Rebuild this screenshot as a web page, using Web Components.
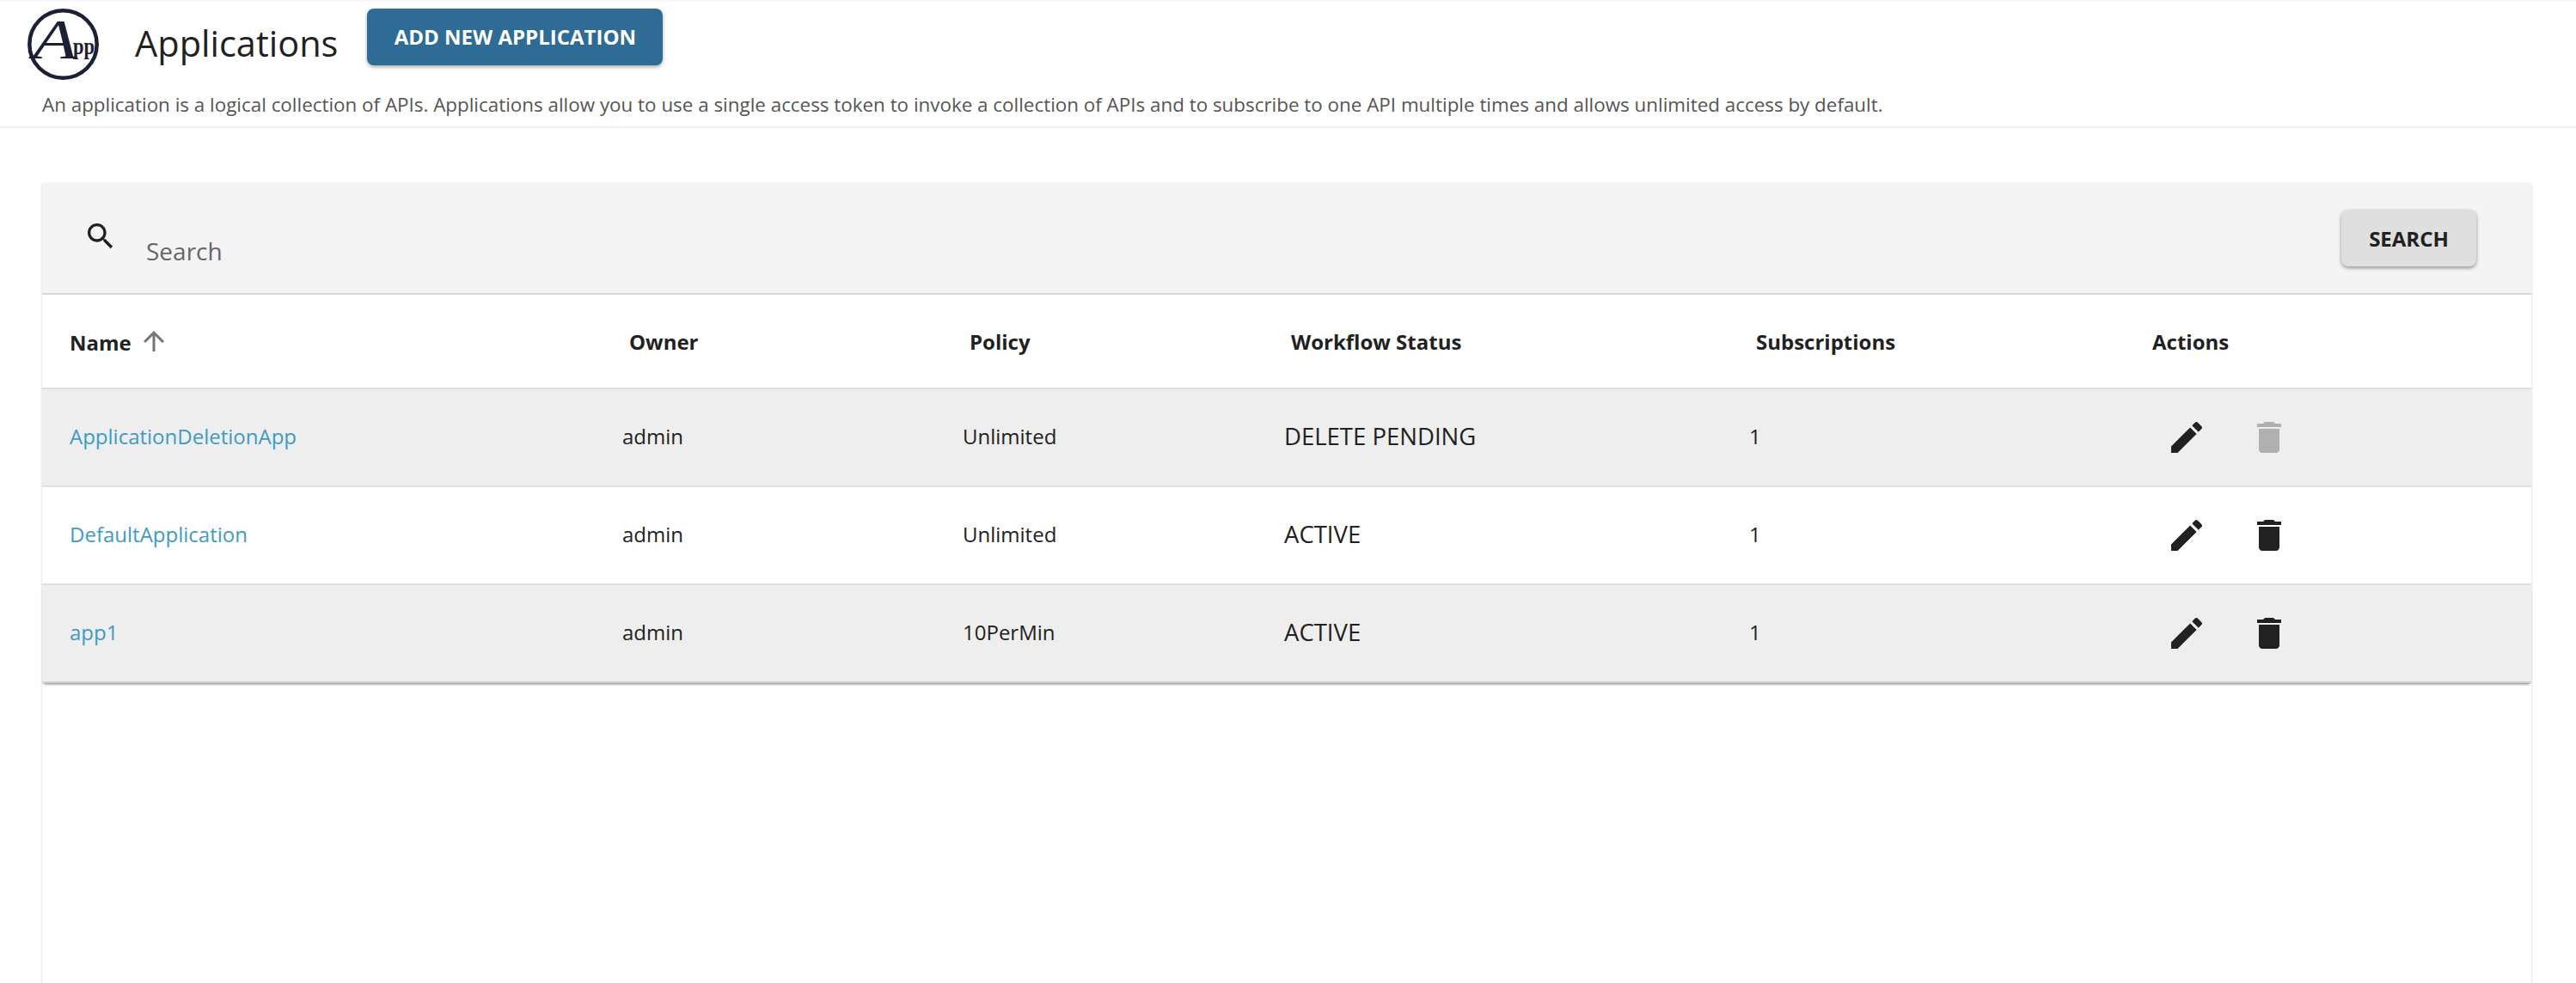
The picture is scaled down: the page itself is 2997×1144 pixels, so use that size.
<!DOCTYPE html>
<html>
<head>
<meta charset="utf-8">
<title>Applications</title>
<style>
    html, body { margin: 0; padding: 0; height: 100%; background: #fff; overflow: hidden; }
    body { font-family: "Open Sans", "Liberation Sans", sans-serif; color: #212121; }
</style>
</head>
<body>
<app-header title-text="Applications" action="ADD NEW APPLICATION">An application is a logical collection of APIs. Applications allow you to use a single access token to invoke a collection of APIs and to subscribe to one API multiple times and allows unlimited access by default.</app-header>
<app-card>
    <search-bar></search-bar>
    <table-head></table-head>
    <app-row name="ApplicationDeletionApp" owner="admin" policy="Unlimited" status="DELETE PENDING" subs="1" shaded disabled></app-row>
    <app-row name="DefaultApplication" owner="admin" policy="Unlimited" status="ACTIVE" subs="1"></app-row>
    <app-row name="app1" owner="admin" policy="10PerMin" status="ACTIVE" subs="1" shaded last></app-row>
</app-card>

<script>
;(function(document){
    'use strict';

    const COLUMNS = 'grid-template-columns: 643px 396px 374px 541px 461px 1fr;';

    const ICONS = {
        search: 'M15.5 14h-.79l-.28-.27C15.41 12.59 16 11.11 16 9.5 16 5.91 13.09 3 9.5 3S3 5.91 3 9.5 5.91 16 9.5 16c1.61 0 3.09-.59 4.23-1.57l.27.28v.79l5 4.99L20.49 19l-4.99-5zm-6 0C7.01 14 5 11.99 5 9.5S7.01 5 9.5 5 14 7.01 14 9.5 11.99 14 9.5 14z',
        up: 'M4 12l1.41 1.41L11 7.83V20h2V7.83l5.58 5.59L20 12l-8-8-8 8z',
        edit: 'M3 17.25V21h3.75L17.81 9.94l-3.75-3.75L3 17.25zM20.71 7.04c.39-.39.39-1.02 0-1.41l-2.34-2.34c-.39-.39-1.02-.39-1.41 0l-1.83 1.83 3.75 3.75 1.83-1.83z',
        del: 'M6 19c0 1.1.9 2 2 2h8c1.1 0 2-.9 2-2V7H6v12zM19 4h-3.5l-1-1h-5l-1 1H5v2h14V4z'
    };

    function icon(name, size){
        return `<svg width="${size}" height="${size}" viewBox="0 0 24 24" fill="currentColor"><path d="${ICONS[name]}"/></svg>`;
    }

    class AppHeader extends HTMLElement {
        constructor(){
            super();
            this._shadowRoot = this.attachShadow({ mode: 'open' });
        }
        connectedCallback(){
            this._shadowRoot.innerHTML = `
                <style>
                    :host {
                        display: block;
                        height: 149px;
                        box-sizing: border-box;
                        border-bottom: 2px solid #eee;
                        border-top: 2px solid #f7f7f7;
                    }
                    .top {
                        display: flex;
                        align-items: flex-start;
                        padding: 6px 0 0 32px;
                        height: 88px;
                    }
                    .logo { width: 86px; height: 86px; flex: none; }
                    h1 {
                        margin: 12px 34px 0 39px;
                        font-size: 41.5px;
                        line-height: 60px;
                        font-weight: 400;
                        color: #212121;
                    }
                    button {
                        margin-top: 2px;
                        width: 344px;
                        height: 66px;
                        padding: 0 0 2px;
                        border: 0;
                        border-radius: 8px;
                        background: #2e6c96;
                        color: #fff;
                        font: 700 24px "Open Sans", sans-serif;
                        box-shadow: 0 2px 4px rgba(0,0,0,.35);
                    }
                    p {
                        margin: 10px 0 0 49px;
                        font-size: 22.4px;
                        line-height: 32px;
                        color: #555;
                    }
                </style>
                <div class="top">
                    <svg class="logo" viewBox="0 0 86 86">
                        <circle cx="41.5" cy="43.5" r="39.2" fill="none" stroke="#1c2033" stroke-width="4.5"/>
                        <text x="6" y="60" font-family="Liberation Serif, serif" font-style="italic" font-size="66" textLength="52" lengthAdjust="spacingAndGlyphs" fill="#1c2033">A</text>
                        <text x="53" y="55" font-family="Liberation Serif, serif" font-weight="700" font-size="28" textLength="25" lengthAdjust="spacingAndGlyphs" fill="#1c2033">pp</text>
                    </svg>
                    <h1>${this.getAttribute('title-text')}</h1>
                    <button>${this.getAttribute('action')}</button>
                </div>
                <p><slot></slot></p>
            `;
        }
    }

    class AppCard extends HTMLElement {
        constructor(){
            super();
            this._shadowRoot = this.attachShadow({ mode: 'open' });
            this._shadowRoot.innerHTML = `
                <style>
                    :host {
                        display: block;
                        margin: 64px 52px 0 49px;
                        height: 1000px;
                        background: #fff;
                        border-radius: 4px 4px 0 0;
                        box-shadow: 0 1px 3px rgba(0,0,0,.2);
                    }
                </style>
                <slot></slot>
            `;
        }
    }

    class SearchBar extends HTMLElement {
        constructor(){
            super();
            this._shadowRoot = this.attachShadow({ mode: 'open' });
            this._shadowRoot.innerHTML = `
                <style>
                    :host {
                        display: flex;
                        align-items: flex-start;
                        box-sizing: border-box;
                        height: 130px;
                        background: #f4f4f4;
                        border-bottom: 2px solid #d9d9d9;
                    }
                    svg { margin: 42px 0 0 48px; color: #212121; }
                    .input {
                        flex: 1;
                        margin: 60px 0 0 33px;
                        font-size: 28px;
                        line-height: 38px;
                        color: #666;
                    }
                    button {
                        margin: 31px 64px 0 0;
                        width: 157px;
                        height: 66px;
                        padding: 0;
                        border: 0;
                        border-radius: 8px;
                        background: #dfdfdf;
                        color: #212121;
                        font: 700 24px "Open Sans", sans-serif;
                        box-shadow: 0 2px 4px rgba(0,0,0,.4);
                    }
                </style>
                ${icon('search', 40)}
                <div class="input">Search</div>
                <button>SEARCH</button>
            `;
        }
    }

    class TableHead extends HTMLElement {
        constructor(){
            super();
            this._shadowRoot = this.attachShadow({ mode: 'open' });
            this._shadowRoot.innerHTML = `
                <style>
                    :host {
                        display: grid;
                        ${COLUMNS}
                        box-sizing: border-box;
                        height: 110px;
                        padding-left: 32px;
                        border-bottom: 2px solid #e0e0e0;
                        font-size: 24px;
                        font-weight: 700;
                        color: #212121;
                    }
                    div { display: flex; align-items: center; padding: 0 0 0 8px; }
                    div.name { padding: 2px 0 0 0; }
                    svg { margin: -2px 0 0 8px; color: #757575; }
                </style>
                <div class="name">Name ${icon('up', 36)}</div>
                <div>Owner</div>
                <div>Policy</div>
                <div>Workflow Status</div>
                <div>Subscriptions</div>
                <div>Actions</div>
            `;
        }
    }

    class AppRow extends HTMLElement {
        constructor(){
            super();
            this._shadowRoot = this.attachShadow({ mode: 'open' });
        }
        connectedCallback(){
            const attr = (n) => this.getAttribute(n);
            const off = this.hasAttribute('disabled');
            this._shadowRoot.innerHTML = `
                <style>
                    :host {
                        display: grid;
                        ${COLUMNS}
                        align-items: center;
                        box-sizing: border-box;
                        height: 114px;
                        padding-left: 32px;
                        background: #fff;
                        border-bottom: 2px solid #e0e0e0;
                        font-size: 24px;
                        color: #212121;
                    }
                    :host([shaded]) { background: #eee; }
                    :host([last]) {
                        border-bottom-color: #d0d0d0;
                        box-shadow: 0 3px 3px -2px rgba(0,0,0,.55);
                        position: relative;
                    }
                    a { color: #3f9ac6; text-decoration: none; }
                    .text { padding-bottom: 3px; }
                    .status { font-size: 27.5px; }
                    .actions { display: flex; margin-left: 0; }
                    .actions span { display: flex; width: 96px; justify-content: center; }
                    .off { color: #b0b0b0; }
                </style>
                <div class="text"><a href="#">${attr('name')}</a></div>
                <div class="text">${attr('owner')}</div>
                <div class="text">${attr('policy')}</div>
                <div class="text status">${attr('status')}</div>
                <div class="text">${attr('subs')}</div>
                <div class="actions">
                    <span>${icon('edit', 48)}</span>
                    <span class="${off ? 'off' : ''}">${icon('del', 48)}</span>
                </div>
            `;
        }
    }

    customElements.define('app-header', AppHeader);
    customElements.define('app-card', AppCard);
    customElements.define('search-bar', SearchBar);
    customElements.define('table-head', TableHead);
    customElements.define('app-row', AppRow);

})(document);
</script>
</body>
</html>
